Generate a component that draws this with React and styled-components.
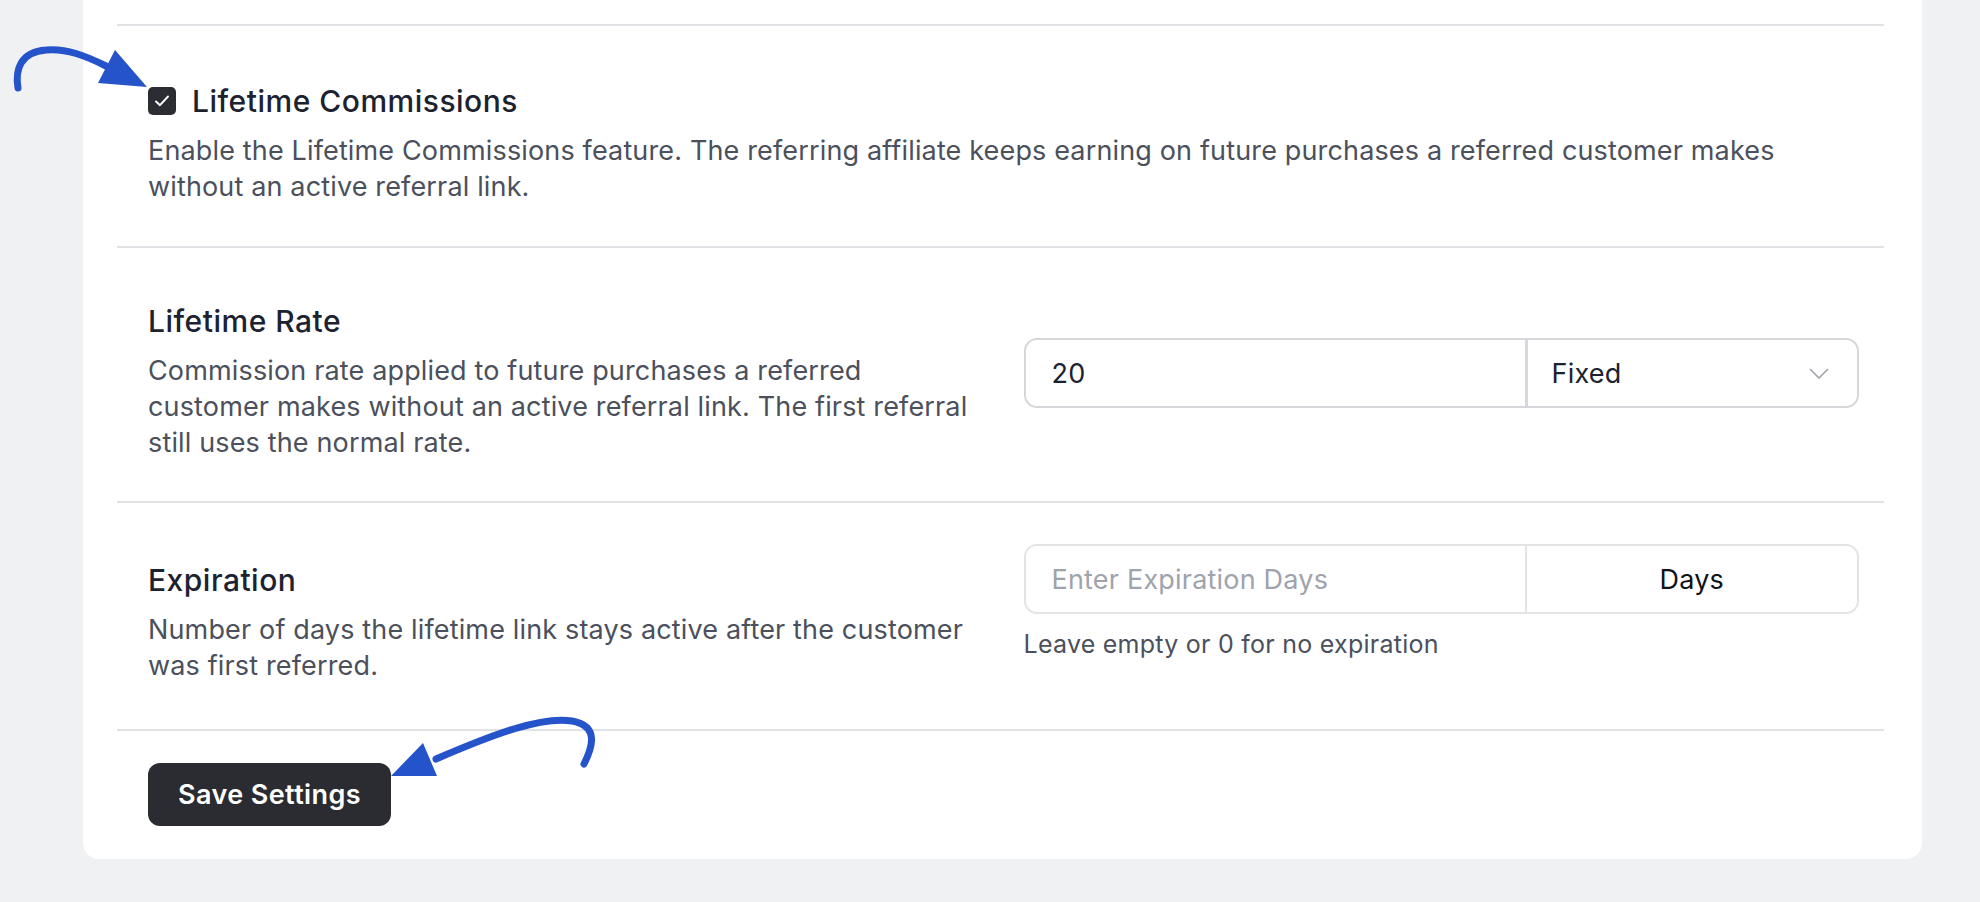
import React from 'react';
import styled, { createGlobalStyle } from 'styled-components';

const GlobalStyle = createGlobalStyle`
    html, body {
        margin: 0;
        padding: 0;
        background: #f0f1f3;
        font-family: Inter, "Noto Sans", "Liberation Sans", sans-serif;
        -webkit-font-smoothing: antialiased;
    }
`

const Page = styled.div`
    position: relative;
    width: 1980px;
    height: 902px;
    overflow: hidden;
`

const Card = styled.div`
    margin-left: 83px;
    width: 1839px;
    box-sizing: border-box;
    background: #ffffff;
    border-radius: 0 0 16px 16px;
    padding: 24px 38px 0 34px;
`

const Section = styled.div`
    border-top: 2px solid #e0e2e5;
    padding: ${props => props.$top}px 25px ${props => props.$bottom}px 31px;
`

const CheckRow = styled.label`
    display: flex;
    align-items: center;
    gap: 16px;
    height: 36px;
`

const Checkbox = styled.span`
    display: flex;
    align-items: center;
    justify-content: center;
    width: 28px;
    height: 28px;
    border-radius: 5px;
    background: #2b2d33;
`

const Title = styled.div`
    font-size: 30px;
    line-height: 36px;
    font-weight: 500;
    letter-spacing: 0.5px;
    color: #1c2230;
`

const Description = styled.p`
    margin: 14px 0 0;
    font-size: 27px;
    line-height: 36px;
    letter-spacing: 0.15px;
    color: #4b505c;
    max-width: ${props => props.$max || 'none'};
`

const Row = styled.div`
    display: grid;
    grid-template-columns: 1fr 1fr;
    column-gap: 40px;
    align-items: start;
`

const TextCol = styled.div`
    margin-top: ${props => props.$offset || 0}px;
`

const ControlCol = styled.div`
    margin-top: ${props => props.$offset || 0}px;
`

const InputGroup = styled.div`
    display: flex;
    height: 70px;
    box-sizing: border-box;
    border: 2px solid ${props => props.$border};
    border-radius: 13px;
    overflow: hidden;
`

const TextInput = styled.input`
    flex: 0 0 499px;
    box-sizing: border-box;
    border: none;
    outline: none;
    padding: 0 26px;
    font-family: inherit;
    font-size: 27px;
    letter-spacing: 0.2px;
    color: #1c2230;
    background: transparent;

    &::placeholder {
        color: #9ea3ad;
    }
`

const SelectBox = styled.div`
    flex: 1;
    display: flex;
    align-items: center;
    justify-content: space-between;
    padding: 0 28px 0 24px;
    border-left: 3px solid #d6d7da;
    font-size: 27px;
    letter-spacing: 0.2px;
    color: #1c2230;
`

const Addon = styled.div`
    flex: 1;
    display: flex;
    align-items: center;
    justify-content: center;
    border-left: 2px solid #e3e4e6;
    font-size: 27px;
    letter-spacing: 0.2px;
    color: #111318;
`

const Help = styled.div`
    margin-top: 18px;
    font-size: 25px;
    line-height: 24px;
    letter-spacing: 0.25px;
    color: #4b505c;
`

const SaveButton = styled.button`
    width: 243px;
    height: 63px;
    border: none;
    border-radius: 12px;
    background: #2a2c31;
    color: #ffffff;
    font-family: inherit;
    font-size: 27px;
    font-weight: 600;
    letter-spacing: 0.4px;
    cursor: pointer;
`

const Marker = styled.svg`
    position: absolute;
    left: 0;
    top: 0;
    pointer-events: none;
`

const ARROW = '#2553c9';

function Chevron() {
    return (
        <svg width="20" height="11" viewBox="0 0 20 11">
            <path d="M1 1 L10 10 L19 1" fill="none" stroke="#a0a4ab" strokeWidth="1.6" />
        </svg>
    );
}

function Check() {
    return (
        <svg width="20" height="20" viewBox="0 0 20 20">
            <path d="M4 10.5 L8 14.2 L16 5.5" fill="none" stroke="#ffffff" strokeWidth="1.9" strokeLinecap="round" strokeLinejoin="round" />
        </svg>
    );
}

export default function App() {
    return (
        <Page>
            <GlobalStyle />
            <Card>
                <Section $top={57} $bottom={41}>
                    <CheckRow>
                        <Checkbox><Check /></Checkbox>
                        <Title>Lifetime Commissions</Title>
                    </CheckRow>
                    <Description $max="1700px">
                        Enable the Lifetime Commissions feature. The referring affiliate keeps earning on future purchases a referred customer makes without an active referral link.
                    </Description>
                </Section>

                <Section $top={55} $bottom={40}>
                    <Row>
                        <TextCol>
                            <Title>Lifetime Rate</Title>
                            <Description $max="820px">
                                Commission rate applied to future purchases a referred customer makes without an active referral link. The first referral still uses the normal rate.
                            </Description>
                        </TextCol>
                        <ControlCol $offset={35}>
                            <InputGroup $border="#d6d7da">
                                <TextInput defaultValue="20" />
                                <SelectBox>
                                    <span>Fixed</span>
                                    <Chevron />
                                </SelectBox>
                            </InputGroup>
                        </ControlCol>
                    </Row>
                </Section>

                <Section $top={41} $bottom={45}>
                    <Row>
                        <TextCol $offset={18}>
                            <Title>Expiration</Title>
                            <Description $max="820px">
                                Number of days the lifetime link stays active after the customer was first referred.
                            </Description>
                        </TextCol>
                        <ControlCol>
                            <InputGroup $border="#e3e4e6">
                                <TextInput placeholder="Enter Expiration Days" />
                                <Addon>Days</Addon>
                            </InputGroup>
                            <Help>Leave empty or 0 for no expiration</Help>
                        </ControlCol>
                    </Row>
                </Section>

                <Section $top={32} $bottom={33}>
                    <SaveButton>Save Settings</SaveButton>
                </Section>
            </Card>

            {/* hand-drawn pointers */}
            <Marker width="1980" height="902" viewBox="0 0 1980 902">
                <path d="M18 88 C 15 70, 20 52, 46 50 C 66 48, 86 56, 106 66" fill="none" stroke={ARROW} strokeWidth="7" strokeLinecap="round" />
                <polygon points="115,50 98,83 147,87" fill={ARROW} />
                <path d="M584 764 C 592 748, 600 726, 572 721 C 542 716, 494 734, 436 759" fill="none" stroke={ARROW} strokeWidth="7" strokeLinecap="round" />
                <polygon points="391,776 423,743 437,776" fill={ARROW} />
            </Marker>
        </Page>
    );
}
